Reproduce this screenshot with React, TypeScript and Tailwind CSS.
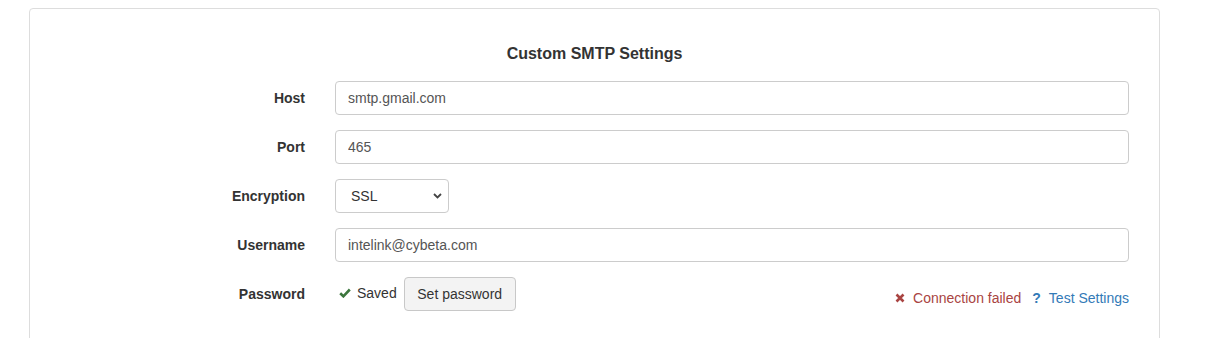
import { useState } from 'react';

const font = { fontFamily: '"Liberation Sans", Arial, sans-serif' };

function Row({ label, children }: { label: string; children: React.ReactNode }) {
    return (
        <div className="flex items-center h-[34px] mb-[15px]">
            <label className="w-[290px] shrink-0 pr-[15px] text-right text-[14px] font-bold text-[#333]">{label}</label>
            <div className="flex-1 pl-[15px] pr-[30px]">{children}</div>
        </div>
    );
}

function TextInput({ value }: { value: string }) {
    const [v, setV] = useState(value);
    return (
        <input
            value={v}
            onChange={(e) => setV(e.target.value)}
            className="w-full h-[34px] px-[12px] text-[14px] text-[#555] border border-[#ccc] rounded-[4px] bg-white outline-none"
            style={font}
        />
    );
}

export default function App() {
    return (
        <div className="bg-white h-[338px] overflow-hidden pt-[8px] pl-[29px]" style={font}>
            <div className="w-[1131px] h-[360px] border border-[#ddd] rounded-[4px] bg-white">
                <h3 className="mt-[35px] mb-[17px] text-center text-[16px] leading-[20px] font-bold text-[#333]">
                    Custom SMTP Settings
                </h3>

                <Row label="Host">
                    <TextInput value="smtp.gmail.com" />
                </Row>
                <Row label="Port">
                    <TextInput value="465" />
                </Row>
                <Row label="Encryption">
                    <div className="relative w-[114px]">
                        <select
                            defaultValue="SSL"
                            className="appearance-none w-[114px] h-[34px] pl-[15px] text-[14px] text-[#333] border border-[#ccc] rounded-[4px] bg-white outline-none"
                            style={font}
                        >
                            <option>None</option>
                            <option>SSL</option>
                            <option>TLS</option>
                        </select>
                        <svg className="absolute right-[7px] top-[14px] pointer-events-none" width="9" height="6" viewBox="0 0 9 6">
                            <path d="M1 1l3.5 3.5L8 1" fill="none" stroke="#444" strokeWidth="1.8" />
                        </svg>
                    </div>
                </Row>
                <Row label="Username">
                    <TextInput value="intelink@cybeta.com" />
                </Row>

                <div className="flex items-start h-[34px]">
                    <label className="w-[290px] shrink-0 pr-[15px] text-right text-[14px] leading-[34px] font-bold text-[#333]">
                        Password
                    </label>
                    <div className="flex-1 pl-[19px] pr-[30px] flex items-start">
                        <div className="flex items-center h-[32px] text-[14px] text-[#333]">
                            <svg width="12" height="10" viewBox="0 0 12 10" className="mr-[6px]">
                                <path d="M1.2 5.2l3.2 3.1L10.8 1.5" fill="none" stroke="#3c763d" strokeWidth="2.6" />
                            </svg>
                            Saved
                        </div>
                        <button
                            className="ml-[7px] h-[34px] w-[112px] text-[14px] text-[#333] bg-[#f3f3f3] border border-[#c8c8c8] rounded-[4px]"
                            style={font}
                        >
                            Set password
                        </button>
                        <div className="ml-auto pt-[11px] flex items-center text-[14px] leading-[20px]">
                            <svg width="10" height="10" viewBox="0 0 10 10" className="mr-[8px]">
                                <path d="M1.5 1.5l7 7M8.5 1.5l-7 7" stroke="#a94442" strokeWidth="2.6" />
                            </svg>
                            <span className="text-[#a94442]">Connection failed</span>
                            <span className="ml-[11px] mr-[8px] font-bold text-[#337ab7]">?</span>
                            <a href="#" className="text-[#337ab7]">Test Settings</a>
                        </div>
                    </div>
                </div>
            </div>
        </div>
    );
}
